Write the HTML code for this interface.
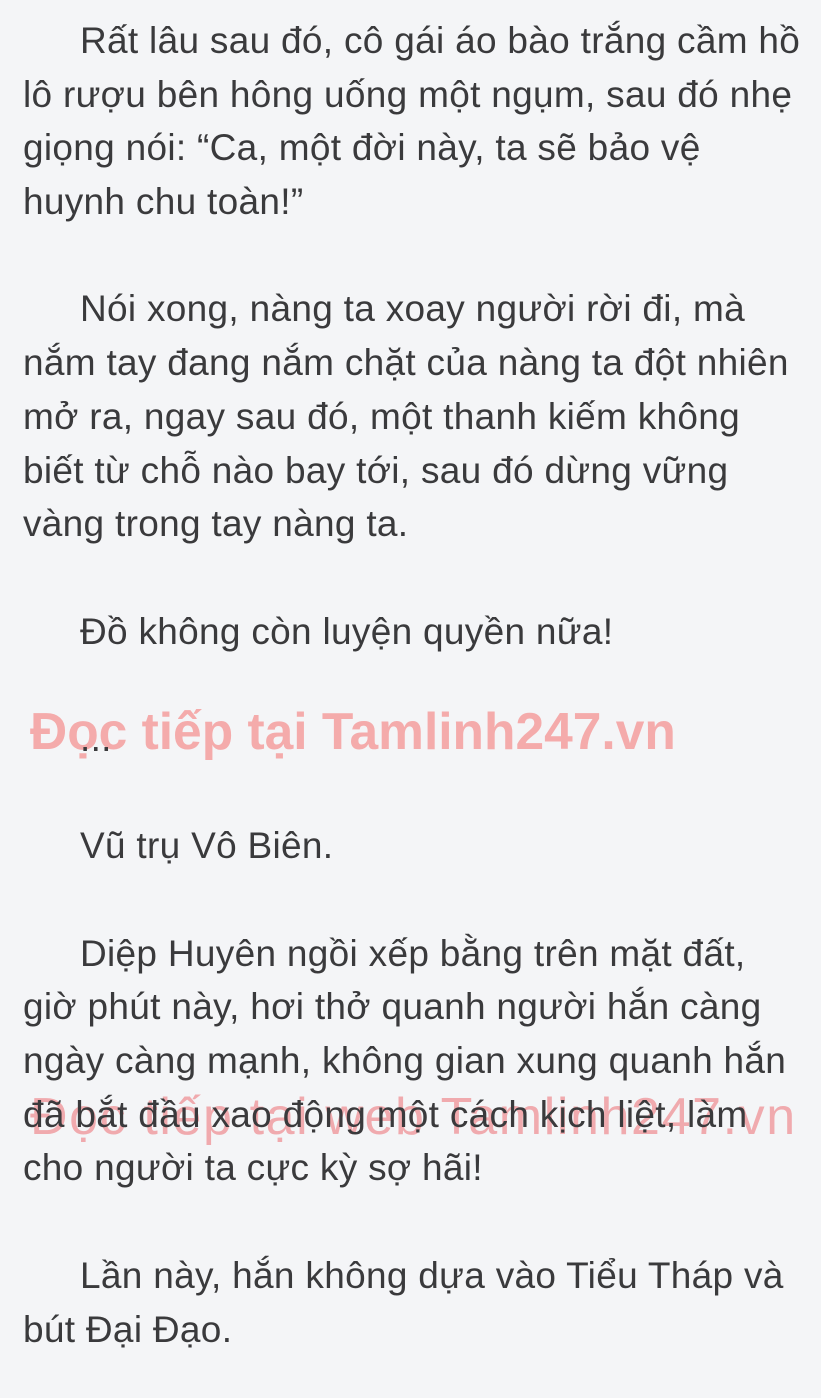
<!DOCTYPE html>
<html><head><meta charset="utf-8"><style>
html,body{margin:0;padding:0}
body{width:821px;height:1398px;background:#f4f5f7;position:relative;overflow:hidden;font-family:"Liberation Sans",sans-serif}
.t{position:absolute;left:23px;top:14px;font-size:37px;line-height:53.7px;color:#3a3a3c;letter-spacing:0.3px;white-space:nowrap;z-index:2}
.t div{height:53.7px}
.i{padding-left:57px}
.w1{position:absolute;left:30px;top:701px;font-size:51.5px;font-weight:bold;color:#f4abab;white-space:nowrap;z-index:1}
.w2{position:absolute;left:30px;top:1087px;font-size:52px;color:rgba(236,120,125,0.6);white-space:nowrap;z-index:1;letter-spacing:1.6px}
</style></head><body>
<div class="w1">Đọc tiếp tại Tamlinh247.vn</div>
<div class="w2">Đọc tiếp tại web Tamlinh247.vn</div>
<div class="t">
<div class="i">Rất lâu sau đó, cô gái áo bào trắng cầm hồ</div>
<div>lô rượu bên hông uống một ngụm, sau đó nhẹ</div>
<div>giọng nói: “Ca, một đời này, ta sẽ bảo vệ</div>
<div>huynh chu toàn!”</div>
<div></div>
<div class="i">Nói xong, nàng ta xoay người rời đi, mà</div>
<div>nắm tay đang nắm chặt của nàng ta đột nhiên</div>
<div>mở ra, ngay sau đó, một thanh kiếm không</div>
<div>biết từ chỗ nào bay tới, sau đó dừng vững</div>
<div>vàng trong tay nàng ta.</div>
<div></div>
<div class="i">Đồ không còn luyện quyền nữa!</div>
<div></div>
<div class="i">...</div>
<div></div>
<div class="i">Vũ trụ Vô Biên.</div>
<div></div>
<div class="i">Diệp Huyên ngồi xếp bằng trên mặt đất,</div>
<div>giờ phút này, hơi thở quanh người hắn càng</div>
<div>ngày càng mạnh, không gian xung quanh hắn</div>
<div>đã bắt đầu xao động một cách kịch liệt, làm</div>
<div>cho người ta cực kỳ sợ hãi!</div>
<div></div>
<div class="i">Lần này, hắn không dựa vào Tiểu Tháp và</div>
<div>bút Đại Đạo.</div>
</div>
</body></html>
